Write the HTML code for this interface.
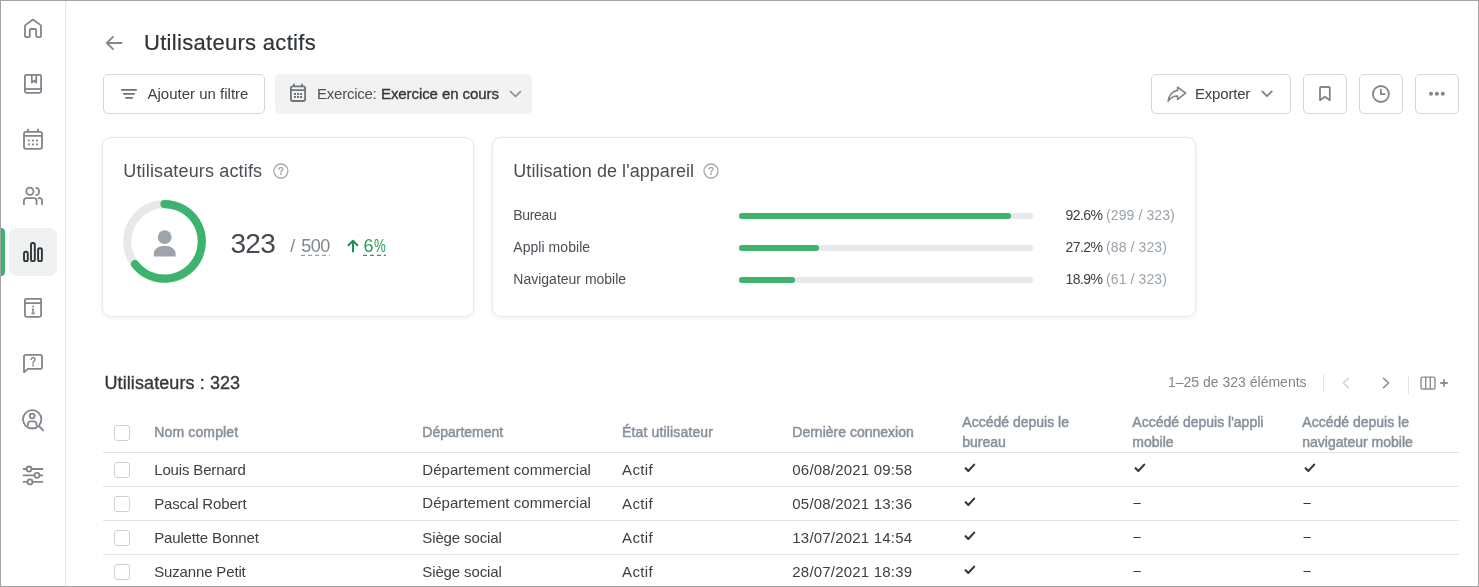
<!DOCTYPE html>
<html><head><meta charset="utf-8">
<style>
*{box-sizing:border-box;margin:0;padding:0}
html,body{width:1479px;height:587px;overflow:hidden;background:#fff}
body{will-change:transform;position:relative;font-family:"Liberation Sans",sans-serif;color:#3c4043}
.a{position:absolute;white-space:nowrap;line-height:1}
.frame{position:absolute;left:0;top:0;width:1479px;height:587px;border:1px solid #a3a3a3;pointer-events:none;z-index:50}
.side{position:absolute;left:0;top:0;width:66px;height:587px;border-right:1px solid #e6e8e9;box-shadow:1px 0 2px rgba(0,0,0,0.025)}
.ico{position:absolute;left:13px;width:40px;height:40px}
.ico svg{width:40px;height:40px;display:block}
.btn{position:absolute;border:1px solid #d5d7d9;border-radius:5px;background:#fff}
.card{position:absolute;background:#fff;border:1px solid #e8e9ea;border-radius:9px;box-shadow:0 1px 5px rgba(0,0,0,0.07)}
.med{-webkit-text-stroke:0.35px currentColor}
.hd{font-size:14px;color:#87919b;-webkit-text-stroke:0.5px #87919b}
.cell{font-size:15px;color:#3c4146}
.pc{left:1065.5px;font-size:14px;color:#3c4146;letter-spacing:-0.55px}
.pp{left:1106px;font-size:14px;color:#9aa3ab;letter-spacing:0.1px}
.rowline{position:absolute;left:103px;width:1356px;height:1px;background:#e2e3e5}
.cb{position:absolute;left:114px;width:16px;height:16px;border:1px solid #cfd2d5;border-radius:3px;background:#fff}
</style></head>
<body>
<div class="side">
  <div style="position:absolute;left:1px;top:228px;width:4px;height:48px;background:#3cb46e;border-radius:0 4px 4px 0"></div>
  <div style="position:absolute;left:9px;top:228px;width:48px;height:48px;background:#eff0f0;border-radius:8px"></div>
  <!-- home -->
  <svg class="a" style="left:13px;top:8px" width="40" height="40" viewBox="13 8 40 40" fill="none" stroke="#80868b" stroke-width="1.8" stroke-linejoin="round" stroke-linecap="round">
    <path d="M25 35.9V25.9Q25 25.4 25.4 25.1L32.3 20Q33 19.5 33.7 20L40.6 25.1Q41 25.4 41 25.9V35.9Q41 37.1 39.8 37.1H37.4Q36.2 37.1 36.2 35.9V30.2Q36.2 29 35 29H31Q29.8 29 29.8 30.2V35.9Q29.8 37.1 28.6 37.1H26.2Q25 37.1 25 35.9Z"/>
  </svg>
  <!-- book -->
  <svg class="a" style="left:13px;top:63px" width="40" height="40" viewBox="13 63 40 40" fill="none" stroke="#80868b" stroke-width="1.8" stroke-linejoin="round">
    <rect x="24.9" y="74.8" width="16.2" height="18" rx="1.5"/>
    <path d="M24.9 89H41.1"/>
    <path d="M31.8 74.8V82.6L34 80.8L36.2 82.6V74.8"/>
  </svg>
  <!-- calendar -->
  <svg class="a" style="left:13px;top:119px" width="40" height="40" viewBox="13 119 40 40" fill="none" stroke="#80868b" stroke-width="1.8" stroke-linejoin="round" stroke-linecap="round">
    <rect x="24" y="131.8" width="18" height="17" rx="2"/>
    <path d="M24 135.9H42"/>
    <path d="M28 129.5V131.5M38 129.5V131.5"/>
    <g stroke="none" fill="#80868b"><rect x="27.9" y="139.6" width="2" height="1.8"/><rect x="31.9" y="139.6" width="2" height="1.8"/><rect x="35.9" y="139.6" width="2" height="1.8"/><rect x="27.9" y="143.5" width="2" height="1.8"/><rect x="31.9" y="143.5" width="2" height="1.8"/><rect x="35.9" y="143.5" width="2" height="1.8"/></g>
  </svg>
  <!-- users -->
  <svg class="a" style="left:13px;top:176px" width="40" height="40" viewBox="13 176 40 40" fill="none" stroke="#80868b" stroke-width="1.8" stroke-linecap="round">
    <circle cx="29.9" cy="191.3" r="3.6"/>
    <path d="M36.2 187.8A2.9 3.6 0 0 1 36.2 195"/>
    <path d="M23.9 204.2V200.8A2.6 2.6 0 0 1 26.5 198.2H34A2.6 2.6 0 0 1 36.6 200.8V204.2"/>
    <path d="M38.4 198.2A2.6 2.6 0 0 1 42.1 200.8V204.2"/>
  </svg>
  <!-- chart -->
  <svg class="a" style="left:13px;top:232px" width="40" height="40" viewBox="13 232 40 40" fill="none" stroke="#2f353a" stroke-width="1.9" stroke-linejoin="round">
    <rect x="24" y="251.8" width="3.8" height="9.3" rx="1.6"/>
    <rect x="31" y="243" width="3.8" height="18.1" rx="1.6"/>
    <rect x="38.1" y="248.2" width="3.8" height="12.9" rx="1.6"/>
  </svg>
  <!-- info book -->
  <svg class="a" style="left:13px;top:287px" width="40" height="40" viewBox="13 287 40 40" fill="none" stroke="#80868b" stroke-width="1.8" stroke-linejoin="round">
    <path d="M41.4 298.8H26.4A1.5 1.5 0 0 0 24.9 300.3V315.3A1.5 1.5 0 0 0 26.4 316.8H39.6A1.5 1.5 0 0 0 41.1 315.3V303.2"/>
    <path d="M24.9 303.2H41.1V298.8"/>
    <path d="M33.1 309V313.4M31.4 313.4H34.8M31.8 309H33.1" stroke-width="1.5"/>
    <circle cx="33.1" cy="306.4" r="0.9" fill="#80868b" stroke="none"/>
  </svg>
  <!-- question -->
  <svg class="a" style="left:13px;top:343px" width="40" height="40" viewBox="13 343 40 40" fill="none" stroke="#80868b" stroke-width="1.8" stroke-linejoin="round">
    <path d="M24 372.2V356.4A1.6 1.6 0 0 1 25.6 354.8H40.4A1.6 1.6 0 0 1 42 356.4V367.3A1.6 1.6 0 0 1 40.4 368.9H28Z"/>
    <path d="M31.2 359.4A1.9 1.9 0 1 1 34.3 361C33.4 361.6 33 362 33 363.2" stroke-width="1.5" stroke-linecap="round"/>
    <circle cx="33" cy="365.4" r="0.95" fill="#80868b" stroke="none"/>
  </svg>
  <!-- search user -->
  <svg class="a" style="left:13px;top:399px" width="40" height="40" viewBox="13 399 40 40" fill="none" stroke="#80868b" stroke-width="1.8" stroke-linecap="round">
    <circle cx="32.2" cy="419.3" r="9.2"/>
    <path d="M38.9 426L43.2 430.4"/>
    <circle cx="32.2" cy="416" r="2.4"/>
    <path d="M28 425.2V423.6A2.2 2.2 0 0 1 30.2 421.4H34.2A2.2 2.2 0 0 1 36.4 423.6V425.2"/>
  </svg>
  <!-- sliders -->
  <svg class="a" style="left:13px;top:455px" width="40" height="40" viewBox="13 455 40 40" fill="none" stroke="#80868b" stroke-width="1.8" stroke-linecap="round">
    <path d="M23.6 469H26.4M31.6 469H42.4"/>
    <path d="M23.6 475.3H34.4M39.6 475.3H42.4"/>
    <path d="M23.6 481.9H27.4M32.6 481.9H42.4"/>
    <circle cx="29" cy="469" r="2.5"/>
    <circle cx="37" cy="475.3" r="2.5"/>
    <circle cx="30" cy="481.9" r="2.5"/>
  </svg>
</div>

<!-- header -->
<svg class="a" style="left:100px;top:30px" width="28" height="26" viewBox="100 30 28 26" fill="none" stroke="#80868b" stroke-width="1.8" stroke-linecap="round" stroke-linejoin="round">
  <path d="M121.5 43H107M113 36.8L106.8 43L113 49.2"/>
</svg>
<div class="a" style="left:144px;top:31.5px;font-size:22px;color:#2f3439;letter-spacing:0.3px;-webkit-text-stroke:0.2px #2f3439">Utilisateurs actifs</div>

<div class="btn" style="left:103px;top:74px;width:162px;height:40px"></div>
<svg class="a" style="left:110px;top:80px" width="40" height="28" viewBox="110 80 40 28" stroke="#6b7178" stroke-width="1.7" stroke-linecap="butt">
  <path d="M121.1 89.9H136.8M123.1 93.9H134.8M125.2 97.9H132.8"/>
</svg>
<div class="a" style="left:147.5px;top:86px;font-size:15px;color:#3c4146">Ajouter un filtre</div>

<div class="a" style="left:275px;top:74px;width:257px;height:40px;background:#f2f2f2;border-radius:5px"></div>
<svg class="a" style="left:284px;top:78px" width="30" height="30" viewBox="284 78 30 30" fill="none" stroke="#6f757c" stroke-width="1.8" stroke-linejoin="round" stroke-linecap="round">
  <rect x="290.9" y="86.4" width="14.2" height="14.6" rx="1.8"/>
  <path d="M290.9 90.2H305.1M294 84.5V86M302 84.5V86"/>
  <g stroke="none" fill="#6f757c"><rect x="294" y="93" width="2" height="2"/><rect x="297" y="93" width="2" height="2"/><rect x="300" y="93" width="2" height="2"/><rect x="294" y="96" width="2" height="2"/><rect x="297" y="96" width="2" height="2"/><rect x="300" y="96" width="2" height="2"/></g>
</svg>
<div class="a" style="left:317px;top:86.3px;font-size:15px;color:#4a4f55;letter-spacing:-0.24px">Exercice: </div><div class="a med" style="left:381px;top:86.3px;font-size:15px;color:#33383d;letter-spacing:-0.08px">Exercice en cours</div>
<svg class="a" style="left:506px;top:86px" width="20" height="16" viewBox="506 86 20 16" fill="none" stroke="#858c93" stroke-width="1.6" stroke-linecap="round" stroke-linejoin="round">
  <path d="M510.5 91.5L515.5 96.5L520.5 91.5"/>
</svg>

<div class="btn" style="left:1151px;top:74px;width:140px;height:40px"></div>
<svg class="a" style="left:1160px;top:78px" width="40" height="30" viewBox="1160 78 40 30" fill="none" stroke="#7d838a" stroke-width="1.6" stroke-linejoin="round">
  <path d="M1177.6 87.2L1185.6 93.2L1177.6 99.4V96C1173 96 1170.4 97.6 1168.2 101.2C1168.8 95.2 1172.4 91 1177.6 90.4Z"/>
</svg>
<div class="a" style="left:1195px;top:86px;font-size:15px;color:#3c4146;letter-spacing:-0.2px">Exporter</div>
<svg class="a" style="left:1258px;top:86px" width="20" height="16" viewBox="1258 86 20 16" fill="none" stroke="#80868c" stroke-width="1.8" stroke-linecap="round" stroke-linejoin="round">
  <path d="M1262.3 91.5L1267 96.2L1271.7 91.5"/>
</svg>

<div class="btn" style="left:1303px;top:74px;width:44px;height:40px"></div>
<svg class="a" style="left:1310px;top:80px" width="30" height="28" viewBox="1310 80 30 28" fill="none" stroke="#80868b" stroke-width="1.8" stroke-linejoin="round">
  <path d="M1320 100.2V87.8A0.8 0.8 0 0 1 1320.8 87H1329A0.8 0.8 0 0 1 1329.8 87.8V100.2L1324.9 96.7Z"/>
</svg>
<div class="btn" style="left:1359px;top:74px;width:44px;height:40px"></div>
<svg class="a" style="left:1366px;top:80px" width="30" height="28" viewBox="1366 80 30 28" fill="none" stroke="#80868b" stroke-width="1.8" stroke-linecap="round" stroke-linejoin="round">
  <circle cx="1380.9" cy="94" r="8"/>
  <path d="M1380.9 89.6V94.2H1384.6"/>
</svg>
<div class="btn" style="left:1415px;top:74px;width:44px;height:40px"></div>
<svg class="a" style="left:1420px;top:85px" width="34" height="18" viewBox="1420 85 34 18" fill="#80868b">
  <circle cx="1431" cy="93.8" r="2"/><circle cx="1436.9" cy="93.8" r="2"/><circle cx="1442.8" cy="93.8" r="2"/>
</svg>

<!-- card 1 -->
<div class="card" style="left:102px;top:137px;width:372px;height:180px"></div>
<div class="a" style="left:123.3px;top:161.9px;font-size:18px;color:#4a4f55;letter-spacing:0.15px">Utilisateurs actifs</div>
<svg class="a" style="left:270px;top:160px" width="22" height="22" viewBox="270 160 22 22" fill="none" stroke="#a4a8ac" stroke-width="1.3">
  <circle cx="280.9" cy="171" r="7"/>
  <path d="M279.1 169.2A1.85 1.85 0 1 1 282 170.7C281.2 171.1 280.9 171.4 280.9 172" stroke-width="1.35" stroke-linecap="round"/>
  <circle cx="280.9" cy="174" r="0.95" fill="#a4a8ac" stroke="none"/>
</svg>
<svg class="a" style="left:118px;top:195px" width="94" height="94" viewBox="118 195 94 94" fill="none">
  <circle cx="164.5" cy="241.4" r="37.3" stroke="#e7e8ea" stroke-width="8.2"/>
  <path d="M164.5 204.1A37.3 37.3 0 1 1 135.0 264.2" stroke="#3cb46e" stroke-width="8.2" stroke-linecap="round"/>
  <g fill="#9ea4ac">
    <circle cx="164.7" cy="237.2" r="6.9"/>
    <path d="M153.8 256.4V253.8C153.8 249.2 158.6 245.8 164.7 245.8C170.8 245.8 175.6 249.2 175.6 253.8V256.4Z"/>
  </g>
</svg>
<div class="a" style="left:230.5px;top:229.5px;font-size:28px;color:#454a50;letter-spacing:-0.7px">323</div>
<div class="a" style="left:290.3px;top:236.8px;font-size:18px;color:#80868b">/</div>
<div class="a" style="left:301.2px;top:236.8px;font-size:18px;color:#80868b;letter-spacing:-0.5px">500</div>
<svg class="a" style="left:300px;top:253px" width="34" height="4" viewBox="300 253 34 4"><path d="M301 255.4H330" stroke="#9a9fa4" stroke-width="1.2" stroke-dasharray="4 3"/></svg>
<svg class="a" style="left:344px;top:236px" width="18" height="20" viewBox="344 236 18 20" fill="none" stroke="#1f8f4f" stroke-width="2" stroke-linecap="round" stroke-linejoin="round">
  <path d="M353 251.6V240.8M348.6 245.2L353 240.8L357.4 245.2"/>
</svg>
<div class="a" style="left:363.5px;top:236.8px;font-size:18px;color:#2a9b5b">6<span style="display:inline-block;transform:scaleX(0.74);transform-origin:0 0;margin-left:0.3px">%</span></div>
<svg class="a" style="left:362px;top:253px" width="26" height="4" viewBox="362 253 26 4"><path d="M363 255.4H386" stroke="#2a9b5b" stroke-width="1.2" stroke-dasharray="4 3"/></svg>

<!-- card 2 -->
<div class="card" style="left:492px;top:137px;width:704px;height:180px"></div>
<div class="a" style="left:513.3px;top:161.9px;font-size:18px;color:#4a4f55;letter-spacing:0.05px">Utilisation de l'appareil</div>
<svg class="a" style="left:700px;top:160px" width="22" height="22" viewBox="700 160 22 22" fill="none" stroke="#a4a8ac" stroke-width="1.3">
  <circle cx="711" cy="171" r="7"/>
  <path d="M709.2 169.2A1.85 1.85 0 1 1 712.1 170.7C711.3 171.1 711 171.4 711 172" stroke-width="1.35" stroke-linecap="round"/>
  <circle cx="711" cy="174" r="0.95" fill="#a4a8ac" stroke="none"/>
</svg>
<div class="a" style="left:513.3px;top:207.9px;font-size:14px;color:#4a4f55;letter-spacing:-0.35px">Bureau</div>
<div class="a" style="left:513.3px;top:240px;font-size:14px;color:#4a4f55;letter-spacing:0.05px">Appli mobile</div>
<div class="a" style="left:513.3px;top:272.3px;font-size:14px;color:#4a4f55;letter-spacing:0px">Navigateur mobile</div>
<div class="a" style="left:739px;top:213px;width:294px;height:6px;background:#e8e9ea;border-radius:3px"><div style="width:272px;height:6px;background:#3cb46e;border-radius:3px"></div></div>
<div class="a" style="left:739px;top:245px;width:294px;height:6px;background:#e8e9ea;border-radius:3px"><div style="width:80px;height:6px;background:#3cb46e;border-radius:3px"></div></div>
<div class="a" style="left:739px;top:277px;width:294px;height:6px;background:#e8e9ea;border-radius:3px"><div style="width:56px;height:6px;background:#3cb46e;border-radius:3px"></div></div>
<div class="a pc" style="top:207.9px">92.6%</div><div class="a pp" style="top:207.9px">(299 / 323)</div>
<div class="a pc" style="top:240px">27.2%</div><div class="a pp" style="top:240px">(88 / 323)</div>
<div class="a pc" style="top:272.3px">18.9%</div><div class="a pp" style="top:272.3px">(61 / 323)</div>

<!-- table toolbar -->
<div class="a med" style="left:104.5px;top:373.7px;font-size:18px;color:#33383d;letter-spacing:0.09px">Utilisateurs : 323</div>
<div class="a" style="left:1168px;top:375.4px;font-size:14px;color:#80868b">1–25 de 323 éléments</div>
<div class="a" style="left:1323px;top:374px;width:1px;height:18px;background:#e3e4e6"></div>
<svg class="a" style="left:1336px;top:372px" width="60" height="22" viewBox="1336 372 60 22" fill="none" stroke-width="1.6" stroke-linecap="round" stroke-linejoin="round">
  <path d="M1348.3 378.4L1343.3 383L1348.3 387.6" stroke="#d3d6d9"/>
  <path d="M1383.6 378.4L1388.6 383L1383.6 387.6" stroke="#8a9098"/>
</svg>
<div class="a" style="left:1408px;top:376px;width:1px;height:18px;background:#e3e4e6"></div>
<svg class="a" style="left:1416px;top:372px" width="36" height="22" viewBox="1416 372 36 22" fill="none" stroke="#8a9098" stroke-width="1.45" stroke-linecap="round" stroke-linejoin="round">
  <rect x="1421" y="377.1" width="14" height="11.8" rx="1.5"/>
  <path d="M1425.7 377.1V388.9M1430.3 377.1V388.9"/>
  <path d="M1440.2 383H1447.8M1444 379.2V386.8" stroke-width="1.8" stroke-linecap="butt"/>
</svg>

<!-- table header -->
<div class="cb" style="top:425px"></div>
<div class="a hd" style="left:154.2px;top:425.2px;letter-spacing:0.15px">Nom complet</div>
<div class="a hd" style="left:422.3px;top:425.2px">Département</div>
<div class="a hd" style="left:622px;top:425.2px;letter-spacing:0.15px">État utilisateur</div>
<div class="a hd" style="left:792.3px;top:425.2px">Dernière connexion</div>
<div class="a hd" style="left:962.3px;line-height:20px;top:411.8px">Accédé depuis le<br>bureau</div>
<div class="a hd" style="left:1132.3px;top:411.8px;line-height:20px">Accédé depuis l'appli<br>mobile</div>
<div class="a hd" style="left:1302.3px;top:411.8px;line-height:20px">Accédé depuis le<br>navigateur mobile</div>
<div class="rowline" style="top:452px"></div>

<!-- rows -->
<div class="cb" style="top:462px"></div>
<div class="a cell" style="left:154.2px;top:462.1px;letter-spacing:-0.15px">Louis Bernard</div>
<div class="a cell" style="left:422.3px;top:462.1px;letter-spacing:0.05px">Département commercial</div>
<div class="a cell" style="left:622px;top:462.1px;letter-spacing:0.4px">Actif</div>
<div class="a cell" style="left:792.3px;top:462.1px;letter-spacing:0.2px">06/08/2021 09:58</div>
<div class="rowline" style="top:486px"></div>

<div class="cb" style="top:496px"></div>
<div class="a cell" style="left:154.2px;top:496.1px;letter-spacing:-0.15px">Pascal Robert</div>
<div class="a cell" style="left:422.3px;top:494.5px;letter-spacing:0.05px">Département commercial</div>
<div class="a cell" style="left:622px;top:496.1px;letter-spacing:0.4px">Actif</div>
<div class="a cell" style="left:792.3px;top:496.1px;letter-spacing:0.2px">05/08/2021 13:36</div>
<div class="rowline" style="top:520px"></div>

<div class="cb" style="top:530px"></div>
<div class="a cell" style="left:154.2px;top:530.1px;letter-spacing:-0.15px">Paulette Bonnet</div>
<div class="a cell" style="left:422.3px;top:530.1px;letter-spacing:-0.12px">Siège social</div>
<div class="a cell" style="left:622px;top:530.1px;letter-spacing:0.4px">Actif</div>
<div class="a cell" style="left:792.3px;top:530.1px;letter-spacing:0.2px">13/07/2021 14:54</div>
<div class="rowline" style="top:554px"></div>

<div class="cb" style="top:564px"></div>
<div class="a cell" style="left:154.2px;top:564.1px;letter-spacing:-0.15px">Suzanne Petit</div>
<div class="a cell" style="left:422.3px;top:564.1px;letter-spacing:-0.12px">Siège social</div>
<div class="a cell" style="left:622px;top:564.1px;letter-spacing:0.4px">Actif</div>
<div class="a cell" style="left:792.3px;top:564.1px;letter-spacing:0.2px">28/07/2021 18:39</div>

<!-- checks and dashes -->
<svg class="a" style="left:955px;top:455px" width="400" height="130" viewBox="955 455 400 130" fill="none" stroke="#33383d" stroke-width="2.1" stroke-linecap="round" stroke-linejoin="round">
  <path d="M965.6 468.2L968.3 471L974.2 464.6"/>
  <path d="M1135.6 468.2L1138.3 471L1144.2 464.6"/>
  <path d="M1305.6 468.2L1308.3 471L1314.2 464.6"/>
  <path d="M965.6 502.2L968.3 505L974.2 498.6"/>
  <path d="M965.6 536.2L968.3 539L974.2 532.6"/>
  <path d="M965.6 570.2L968.3 573L974.2 566.6"/>
  <g stroke-width="1.2" stroke-linecap="butt"><path d="M1133.5 503.5H1140.6M1303.5 503.5H1310.6M1133.5 537.5H1140.6M1303.5 537.5H1310.6M1133.5 571.5H1140.6M1303.5 571.5H1310.6"/></g>
</svg>

<div class="frame"></div>
</body></html>
